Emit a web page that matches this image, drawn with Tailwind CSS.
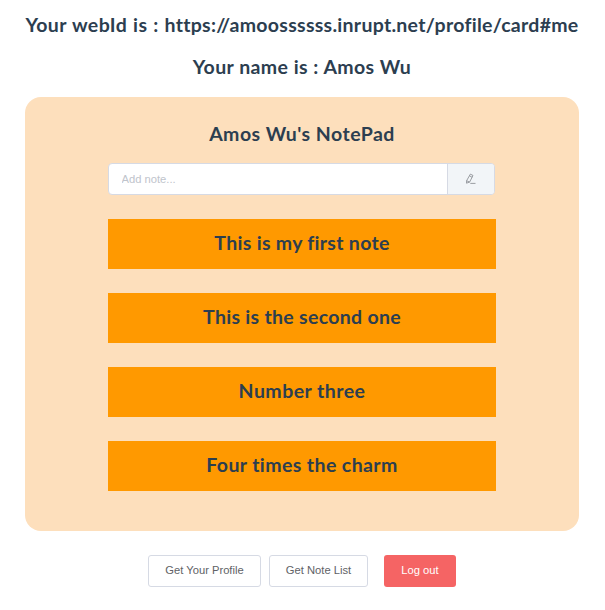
<!DOCTYPE html>
<html lang="en">
<head>
<meta charset="utf-8">
<title>NotePad</title>
<script src="https://cdn.jsdelivr.net/npm/@tailwindcss/browser@4"></script>
</head>
<body class="bg-white">
<div class="flex h-[610px] w-[605px] flex-col overflow-hidden pl-[25px] pr-[26px] pt-3 text-center font-['Lato',sans-serif] text-[19.5px] font-bold leading-[26px] text-[#2c3e50]">
  <h3 class="whitespace-nowrap tracking-[0.4px] [word-spacing:0.7px]">Your webId is : <span class="tracking-[0.28px]">https://amoossssss.inrupt.net/profile/card#me</span></h3>
  <h3 class="mt-4 tracking-[0.36px] [word-spacing:0.3px]">Your name is : Amos Wu</h3>
  <main class="mt-[17px] h-[434px] rounded-2xl bg-[#fddfbc] px-[83px] pt-6">
    <h3 class="tracking-[0.46px]">Amos Wu's NotePad</h3>
    <div class="mt-4 flex h-8 w-[387px] overflow-hidden rounded border border-[#d6dae4] bg-white font-['Liberation_Sans',sans-serif] text-[11px] font-normal">
      <input class="min-w-0 flex-1 px-[12.5px] text-[11.2px] outline-none placeholder:text-[#c0c4cc]" placeholder="Add note...">
      <button class="flex w-[47px] items-center justify-center border-l border-[#d6dae4] bg-[#f2f5f8]" aria-label="Add">
        <svg class="size-3" viewBox="0 0 12 12" fill="none" stroke="#909399" stroke-width="0.9"><path d="M5.4 1.1 8 2.5 4.6 9.1 1.5 10.2 1.6 7.7ZM4.5 2.8 7.1 4.3M1.6 7.7 4.6 9.1M5.3 10.4H10.5"/></svg>
      </button>
    </div>
    <ul class="mt-6 flex flex-col gap-6 tracking-[0.3px]">
      <li class="h-[50px] bg-[#ff9900] pt-[11px]">This is my first note</li>
      <li class="h-[50px] bg-[#ff9900] pt-[11px]">This is the second one</li>
      <li class="h-[50px] bg-[#ff9900] pt-[11px] tracking-[0.46px]">Number three</li>
      <li class="h-[50px] bg-[#ff9900] pt-[11px] tracking-[0.4px]">Four times the charm</li>
    </ul>
  </main>
  <div class="mt-6 flex pl-[123px] font-['Liberation_Sans',sans-serif] text-[11.2px] font-normal leading-[29px] text-[#606266]">
    <button class="h-8 w-[113px] rounded-[3px] border border-[#d6dae4] pb-px">Get Your Profile</button>
    <button class="ml-2 h-8 w-[99px] rounded-[3px] border border-[#d6dae4] pb-px">Get Note List</button>
    <button class="ml-4 h-8 w-[72px] rounded-[3px] bg-[#f56464] pb-px text-white">Log out</button>
  </div>
</div>
</body>
</html>
